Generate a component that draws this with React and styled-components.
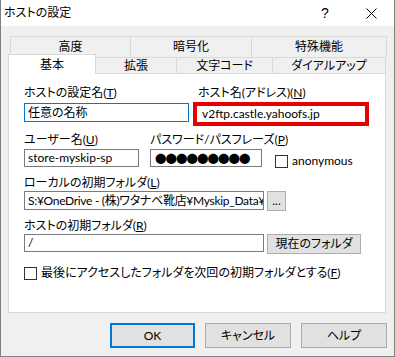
import React from 'react'
import styled, { createGlobalStyle } from 'styled-components'

const GlobalStyle = createGlobalStyle`
  html, body {
    margin: 0;
    padding: 0;
    background: #ffffff;
  }
  body {
    font-family: Lato, "Noto Sans CJK JP", sans-serif;
    font-size: 12px;
    font-feature-settings: "palt";
    color: #000;
  }
`

const Window = styled.div`
  width: 395px;
  height: 357px;
  box-sizing: border-box;
  border: 1px solid #7f7f7f;
  border-top: none;
  display: flex;
  flex-direction: column;
  background: #f0f0f0;
`

const TitleBar = styled.div`
  height: 26px;
  flex: none;
  background: #ffffff;
  display: flex;
  align-items: center;
  padding-left: 3px;
`

const Title = styled.div`
  flex: 1;
  line-height: 14px;
`

const Caption = styled.div`
  width: 46px;
  height: 26px;
  display: flex;
  align-items: center;
  justify-content: center;
  font-family: "Liberation Sans", sans-serif;
  font-size: 14px;
`

const Body = styled.div`
  flex: 1;
  padding: 10px 7px 0 7px;
  display: flex;
  flex-direction: column;
`

const BackRow = styled.div`
  display: flex;
  margin-left: 2px;
  height: 21px;
`

const FrontRow = styled.div`
  display: flex;
  align-items: flex-end;
  height: 19px;
  margin-top: -3px;
  position: relative;
  z-index: 1;
`

const Tab = styled.div`
  box-sizing: border-box;
  width: ${p => p.$w}px;
  height: ${p => (p.$active ? 20 : p.$back ? 21 : 16)}px;
  margin-bottom: ${p => (p.$active ? -1 : 0)}px;
  border: 1px solid #d9d9d9;
  border-bottom: none;
  margin-left: ${p => (p.$first ? 0 : -1)}px;
  background: ${p => (p.$active ? '#ffffff' : '#f0f0f0')};
  text-align: center;
  line-height: ${p => (p.$back ? 19 : p.$active ? 19 : 15)}px;
  white-space: nowrap;
`

const Panel = styled.div`
  box-sizing: border-box;
  width: 378px;
  height: 240px;
  background: #ffffff;
  border: 1px solid #d9d9d9;
  padding: 12px 0 0 15px;
  display: flex;
  flex-direction: column;
`

const Row = styled.div`
  display: flex;
  align-items: flex-start;
  margin-top: ${p => p.$mt || 0}px;
`

const Field = styled.div`
  display: flex;
  flex-direction: column;
  width: ${p => (p.$w ? `${p.$w}px` : 'auto')};
  margin-left: ${p => p.$ml || 0}px;
`

const Label = styled.div`
  line-height: 14px;
  height: 14px;
  white-space: nowrap;
  margin-left: ${p => p.$ml || 0}px;
  margin-bottom: ${p => (p.$mb === undefined ? 3 : p.$mb)}px;
`

const Input = styled.div`
  box-sizing: border-box;
  width: ${p => p.$w}px;
  height: ${p => p.$h || 18}px;
  border: 1px solid ${p => (p.$focus ? '#0078d7' : '#7a7a7a')};
  background: #ffffff;
  padding-left: 3px;
  display: flex;
  align-items: center;
  overflow: hidden;
  white-space: nowrap;
  line-height: 14px;
  letter-spacing: ${p => (p.$tight ? '-0.3px' : 'normal')};
`

const Highlight = styled.div`
  box-sizing: border-box;
  width: 176px;
  height: 24px;
  margin-top: -1px;
  border: 4px solid #e60000;
  background: #ffffff;
  padding-left: 5px;
  display: flex;
  align-items: center;
  line-height: 14px;
  white-space: nowrap;
`

const Dots = styled.span`
  font-family: "Noto Sans CJK JP", sans-serif;
  font-size: 11.5px;
  letter-spacing: -1px;
  line-height: 14px;
  margin-left: 1px;
`

const Check = styled.span`
  box-sizing: border-box;
  display: inline-block;
  width: 13px;
  height: 13px;
  border: 1px solid #333333;
  background: #ffffff;
  flex: none;
`

const CheckLine = styled.label`
  display: flex;
  align-items: center;
  gap: 4px;
  line-height: 14px;
  white-space: nowrap;
  margin-left: ${p => p.$ml || 0}px;
  margin-top: ${p => p.$mt || 0}px;
`

const SmallButton = styled.div`
  box-sizing: border-box;
  width: ${p => p.$w}px;
  height: 20px;
  margin-left: 3px;
  background: #e1e1e1;
  border: 1px solid #adadad;
  display: flex;
  align-items: center;
  justify-content: center;
  line-height: 14px;
  white-space: nowrap;
`

const ButtonRow = styled.div`
  display: flex;
  justify-content: flex-end;
  gap: 10px;
  margin-top: 10px;
`

const Button = styled.div`
  box-sizing: border-box;
  width: ${p => p.$w}px;
  height: 25px;
  background: #e1e1e1;
  border: ${p => (p.$default ? '2px solid #0078d7' : '1px solid #adadad')};
  display: flex;
  align-items: center;
  justify-content: center;
  line-height: 14px;
`

const CloseIcon = () => (
  <svg width="11" height="11" viewBox="0 0 11 11">
    <path d="M0.5 0.5 L10.5 10.5 M10.5 0.5 L0.5 10.5" stroke="#000" strokeWidth="1" fill="none" />
  </svg>
)

const backTabs = [
  { name: '高度', w: 121 },
  { name: '暗号化', w: 122 },
  { name: '特殊機能', w: 136 },
]

const frontTabs = [
  { name: '基本', w: 88, active: true },
  { name: '拡張', w: 82 },
  { name: '文字コード', w: 97 },
  { name: 'ダイアルアップ', w: 114 },
]

export default function App() {
  return (
    <>
      <GlobalStyle />
      <Window>
        <TitleBar>
          <Title>ホストの設定</Title>
          <Caption>?</Caption>
          <Caption><CloseIcon /></Caption>
        </TitleBar>
        <Body>
          <BackRow>
            {backTabs.map((t, i) => (
              <Tab key={t.name} $w={t.w} $back $first={i === 0}>{t.name}</Tab>
            ))}
          </BackRow>
          <FrontRow>
            {frontTabs.map((t, i) => (
              <Tab key={t.name} $w={t.w} $active={t.active} $first={i === 0}>{t.name}</Tab>
            ))}
          </FrontRow>
          <Panel>
            <Row>
              <Field $w={165}>
                <Label>ホストの設定名(<u>T</u>)</Label>
                <Input $w={165} $h={19} $focus>任意の名称</Input>
              </Field>
              <Field $ml={4}>
                <Label $ml={5}>ホスト名(アドレス)(<u>N</u>)</Label>
                <Highlight>v2ftp.castle.yahoofs.jp</Highlight>
              </Field>
            </Row>
            <Row $mt={7}>
              <Field $w={115}>
                <Label $mb={2}>ユーザー名(<u>U</u>)</Label>
                <Input $w={115}>store-myskip-sp</Input>
              </Field>
              <Field $w={112} $ml={11}>
                <Label $mb={2}>パスワード/パスフレーズ(<u>P</u>)</Label>
                <Input $w={112}><Dots>●●●●●●●●●</Dots></Input>
              </Field>
              <CheckLine $ml={13} $mt={21}>
                <Check />
                <span>anonymous</span>
              </CheckLine>
            </Row>
            <Row $mt={8}>
              <Field>
                <Label $mb={1}>ローカルの初期フォルダ(<u>L</u>)</Label>
                <Row>
                  <Input $w={240} $h={19} $tight>S:¥OneDrive - (株)ワタナベ靴店¥Myskip_Data¥</Input>
                  <SmallButton $w={19}>...</SmallButton>
                </Row>
              </Field>
            </Row>
            <Row $mt={8}>
              <Field>
                <Label $mb={1}>ホストの初期フォルダ(<u>R</u>)</Label>
                <Row>
                  <Input $w={240}>/</Input>
                  <SmallButton $w={94}>現在のフォルダ</SmallButton>
                </Row>
              </Field>
            </Row>
            <CheckLine $mt={12}>
              <Check />
              <span>最後にアクセスしたフォルダを次回の初期フォルダとする(<u>F</u>)</span>
            </CheckLine>
          </Panel>
          <ButtonRow>
            <Button $w={85} $default>OK</Button>
            <Button $w={86}>キャンセル</Button>
            <Button $w={86}>ヘルプ</Button>
          </ButtonRow>
        </Body>
      </Window>
    </>
  )
}
